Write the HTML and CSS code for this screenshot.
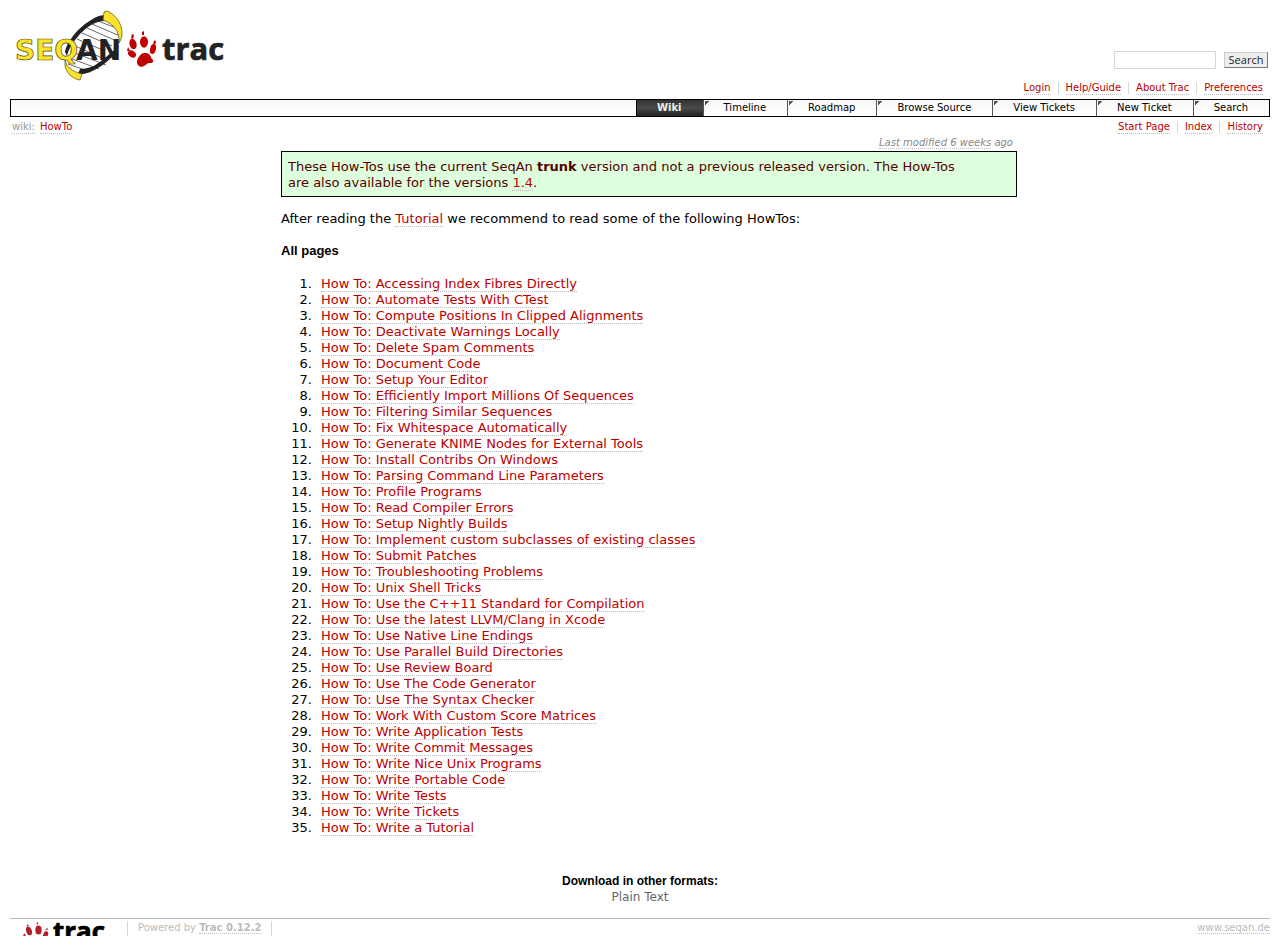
FILE: index.html
```html
<!DOCTYPE html>
<html lang="en">
<head>
<meta charset="utf-8">
<meta name="viewport" content="width=device-width, initial-scale=1">
<title>HowTo – SeqAn</title>
<link rel="stylesheet" href="styles.css">
</head>
<body>
<header class="banner">
  <a class="logo" href="#" aria-label="SeqAn Trac">
    <svg width="220" height="76" viewBox="10 6 220 76" role="img" aria-hidden="true">
      <path d="M79 72C97 73 119 52 121 34C121 24 115 20 105 18C87 18 68 36 66 55C66 64 71 70 79 72Z" fill="#fff"/>
      <g stroke="#444" stroke-width=".8" fill="none">
        <path d="M98 21L119 29M92 24L120 36M87 28L119 42M82 33L112 46M77 39L105 51M73 45L100 57M70 51L106 65M67 57L99 69M68 64L91 72"/>
      </g>
      <path d="M108 16L106 21C96 20 87 27 80 34C73 42 69 48 67 56L65 52C67 41 79 27 91 20C97 16 103 14 108 16Z" fill="#222"/>
      <path d="M78 74L80 69C91 69 98 64 106 57L119 46C116 54 108 62 98 68C91 72 84 75 78 74Z" fill="#222"/>
      <path d="M104 12L107 11C115 14 122 23 122 33C122 37 121 40 119 43C120 32 114 24 103 20Z" fill="#fce228" stroke="#554d16" stroke-width=".7"/>
      <path d="M65 58C65 65 70 71 82 74L80 80C72 79 66 72 65 66Z" fill="#fce228" stroke="#554d16" stroke-width=".7"/>
      <text class="logo-seq" x="15" y="60">SEQ</text>
      <text class="logo-an" x="76" y="60">AN</text>
      <g fill="#c00000">
        <ellipse cx="133" cy="44" rx="3.5" ry="5.4" transform="rotate(-15 133 44)"/>
        <ellipse cx="144" cy="42" rx="4" ry="5.8"/>
        <ellipse cx="153" cy="49" rx="2.900" ry="5" transform="rotate(15 153 49)"/>
        <ellipse cx="132" cy="54" rx="4.300" ry="3.200" transform="rotate(35 132 54)"/>
        <path d="M131 38L132 34L134 35L133 39ZM142 35L142 32L144 31L144 35ZM153 43L155 40L156 42L155 45ZM127 51L128 47L130 51Z"/>
        <path d="M138 58C140 56 141 53 144 53C149 53 150 55 151 57C151 59 154 59 153 62C151 64 148 62 147 64C144 66 142 68 139 66C136 63 137 61 138 58Z"/>
      </g>
      <text class="logo-trac" x="162" y="60">trac</text>
    </svg>
  </a>
  <div class="banner-tools">
    <form class="search" onsubmit="return false">
      <input type="text" aria-label="Search this site">
      <button type="submit">Search</button>
    </form>
    <nav class="links meta-links" aria-label="Account">
      <a href="#">Login</a><a href="#">Help/Guide</a><a href="#">About Trac</a><a href="#">Preferences</a>
    </nav>
  </div>
</header>
<nav class="mainnav" aria-label="Main">
  <a class="active" href="#">Wiki</a><a href="#">Timeline</a><a href="#">Roadmap</a><a href="#">Browse Source</a><a href="#">View Tickets</a><a href="#">New Ticket</a><a href="#">Search</a>
</nav>
<div class="context">
  <div class="path"><a class="muted" href="#">wiki:</a><a href="#">HowTo</a></div>
  <nav class="links" aria-label="Wiki"><a href="#">Start Page</a><a href="#">Index</a><a href="#">History</a></nav>
</div>
<main class="content">
  <p class="modified"><a href="#">Last modified</a> <a href="#">6 weeks</a> ago</p>
  <div class="notice">These How-Tos use the current SeqAn <strong>trunk</strong> version and not a previous released version. The How-Tos are also available for the versions <a href="#">1.4</a>.</div>
  <p class="intro">After reading the <a href="#">Tutorial</a> we recommend to read some of the following HowTos:</p>
  <h1>All pages</h1>
  <ol class="pages">
    <li><a href="#">How To: Accessing Index Fibres Directly</a></li>
    <li><a href="#">How To: Automate Tests With CTest</a></li>
    <li><a href="#">How To: Compute Positions In Clipped Alignments</a></li>
    <li><a href="#">How To: Deactivate Warnings Locally</a></li>
    <li><a href="#">How To: Delete Spam Comments</a></li>
    <li><a href="#">How To: Document Code</a></li>
    <li><a href="#">How To: Setup Your Editor</a></li>
    <li><a href="#">How To: Efficiently Import Millions Of Sequences</a></li>
    <li><a href="#">How To: Filtering Similar Sequences</a></li>
    <li><a href="#">How To: Fix Whitespace Automatically</a></li>
    <li><a href="#">How To: Generate KNIME Nodes for External Tools</a></li>
    <li><a href="#">How To: Install Contribs On Windows</a></li>
    <li><a href="#">How To: Parsing Command Line Parameters</a></li>
    <li><a href="#">How To: Profile Programs</a></li>
    <li><a href="#">How To: Read Compiler Errors</a></li>
    <li><a href="#">How To: Setup Nightly Builds</a></li>
    <li><a href="#">How To: Implement custom subclasses of existing classes</a></li>
    <li><a href="#">How To: Submit Patches</a></li>
    <li><a href="#">How To: Troubleshooting Problems</a></li>
    <li><a href="#">How To: Unix Shell Tricks</a></li>
    <li><a href="#">How To: Use the C++11 Standard for Compilation</a></li>
    <li><a href="#">How To: Use the latest LLVM/Clang in Xcode</a></li>
    <li><a href="#">How To: Use Native Line Endings</a></li>
    <li><a href="#">How To: Use Parallel Build Directories</a></li>
    <li><a href="#">How To: Use Review Board</a></li>
    <li><a href="#">How To: Use The Code Generator</a></li>
    <li><a href="#">How To: Use The Syntax Checker</a></li>
    <li><a href="#">How To: Work With Custom Score Matrices</a></li>
    <li><a href="#">How To: Write Application Tests</a></li>
    <li><a href="#">How To: Write Commit Messages</a></li>
    <li><a href="#">How To: Write Nice Unix Programs</a></li>
    <li><a href="#">How To: Write Portable Code</a></li>
    <li><a href="#">How To: Write Tests</a></li>
    <li><a href="#">How To: Write Tickets</a></li>
    <li><a href="#">How To: Write a Tutorial</a></li>
  </ol>
</main>
<section class="formats">
  <h2>Download in other formats:</h2>
  <a href="#">Plain Text</a>
</section>
<footer class="footer">
  <a class="footer-logo" href="#" aria-label="Trac">
    <svg width="107" height="30" viewBox="10 921 107 30" aria-hidden="true">
      <g fill="#b3202a">
        <ellipse cx="29" cy="931" rx="2.8" ry="4.4" transform="rotate(-20 29 931)"/>
        <ellipse cx="38.500" cy="930" rx="3.200" ry="4.500"/>
        <ellipse cx="45.500" cy="935" rx="2.400" ry="4" transform="rotate(20 45.500 935)"/>
        <ellipse cx="27" cy="939" rx="3" ry="2.500"/>
        <path d="M26.500 927L27.500 924L29 926ZM36.500 924.500L37 921.500L38.500 924ZM45 930L47.500 927.500L47.500 930ZM23 937L24 933L26 936Z"/>
        <path d="M33 942C36 937 42 938 43 942L45 946L38 947L34 950L31 946Z"/>
      </g>
      <text class="footer-trac" x="53" y="941">trac</text>
    </svg>
  </a>
  <p class="powered">Powered by <a href="#"><strong>Trac 0.12.2</strong></a><br>By <a href="#">Edgewall Software</a>.</p>
  <p class="site"><a href="#">www.seqan.de</a></p>
</footer>
</body>
</html>
```
FILE: styles.css
```css
html {
  scrollbar-width: none;
}

body {
  margin: 10px;
  background: #fff;
  color: #000;
  font: 13px/16px Verdana, "DejaVu Sans", sans-serif;
}

a {
  color: #b00;
  text-decoration: none;
  border-bottom: 1px dotted #bbb;
}

.banner {
  display: flex;
  justify-content: space-between;
  height: 89px;
}

.logo,
.footer-logo {
  border: 0;
}

.logo svg,
.footer-logo svg {
  display: block;
}

.logo {
  margin-top: -4px;
}

.logo-seq {
  font: bold 28px "DejaVu Sans", sans-serif;
  fill: #fce228;
  stroke: #554d16;
  stroke-width: 0.7px;
}

.logo-an {
  font: bold 28px "DejaVu Sans", sans-serif;
  fill: #222;
}

.logo-trac {
  font: bold 31px "Open Sans", sans-serif;
  fill: #222;
  stroke: #222;
  stroke-width: 0.7px;
}

.banner-tools {
  display: flex;
  flex-direction: column;
  justify-content: flex-end;
  align-items: flex-end;
  gap: 13px;
  padding-bottom: 4px;
}

.search {
  display: flex;
  align-items: center;
  gap: 8px;
  margin-right: 2px;
}

.search input {
  box-sizing: border-box;
  width: 102px;
  height: 18px;
  padding: 0 2px;
  border: 1px solid #d7d7d7;
  font: 11px "DejaVu Sans", sans-serif;
}

.search button {
  box-sizing: border-box;
  width: 44px;
  height: 16px;
  padding: 0;
  border: 1px solid #ccc;
  border-right-color: #777;
  border-bottom-color: #777;
  background: #eee;
  color: #222;
  font: 11px/12px "Open Sans", sans-serif;
}

.links {
  display: flex;
  gap: 15px;
  margin-right: 7px;
  font-size: 10px;
  line-height: 12px;
}

.links a {
  position: relative;
}

.links a + a::before {
  content: "";
  position: absolute;
  left: -8px;
  top: 0;
  height: 12px;
  border-left: 1px solid #d7d7d7;
}

.mainnav {
  display: flex;
  justify-content: flex-end;
  border: 1px solid #000;
  background: linear-gradient(#f7f7f7, #fff);
  font-size: 10px;
  line-height: 16px;
}

.mainnav a {
  padding: 0 21px 0 20px;
  border: 0;
  border-left: 1px solid #555;
  background: linear-gradient(135deg, #555 3px, transparent 3px) 1px 1px no-repeat;
  color: #000;
}

.mainnav .active {
  border-color: #000;
  background: linear-gradient(#333, #484b48 50%, #222);
  color: #eee;
  font-weight: bold;
}

.context {
  display: flex;
  justify-content: space-between;
  padding-top: 4px;
  font-size: 10px;
  line-height: 12px;
}

.path {
  display: flex;
  gap: 5px;
  padding-left: 2px;
}

.muted {
  color: #999;
}

.content {
  max-width: 736px;
  margin: 0 auto;
  padding-left: 18px;
}

.modified {
  margin: 3px 4px 2px 0;
  color: #888;
  font-size: 10px;
  font-style: italic;
  line-height: 12px;
  text-align: right;
}

.modified a {
  color: inherit;
}

.notice {
  padding: 7px 40px 5px 6px;
  border: 1px solid #000;
  background: #dfd;
  color: #500;
}

.intro {
  margin: 14px 0 16px;
}

h1,
h2 {
  font-family: Arial, "Liberation Sans", sans-serif;
}

h1 {
  margin: 0 0 17px;
  font-size: 13px;
}

.pages {
  margin: 0;
  padding-left: 35px;
}

.pages li {
  padding-left: 5px;
}

.formats {
  margin-top: 38px;
  text-align: center;
  font-size: 12px;
}

h2 {
  margin: 0;
  font-size: 12px;
  line-height: 15px;
}

.formats a {
  border: 0;
  color: #666;
}

.footer {
  display: flex;
  align-items: flex-start;
  margin-top: 13px;
  padding-top: 2px;
  border-top: 1px solid #bbb;
  color: #bbb;
  font-size: 10px;
  line-height: 13px;
}

.footer a {
  color: #bbb;
}

.footer-trac {
  font: bold 26px "Open Sans", sans-serif;
  fill: #000;
  stroke: #000;
  stroke-width: 0.7px;
}

.footer p {
  margin: 0;
}

.footer .powered {
  margin-left: 10px;
  padding: 0 10px;
  border: solid #d7d7d7;
  border-width: 0 1px;
}

.footer .site {
  margin-left: auto;
}
```
